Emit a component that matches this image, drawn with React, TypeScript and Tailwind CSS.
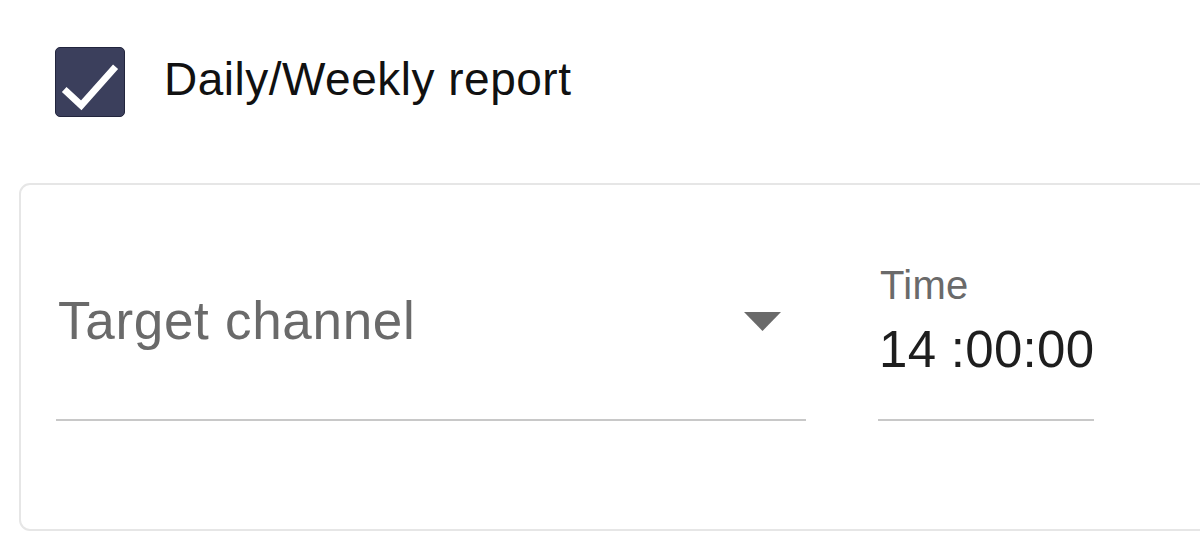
import React from "react";

export default function App() {
  return (
    <div
      className="w-[1200px] h-[548px] overflow-hidden bg-white pt-[47px]"
      style={{ fontFamily: "'Liberation Sans', Arial, sans-serif" }}
    >
      <div className="flex items-center pl-[55px]">
        <div className="w-[70px] h-[70px] rounded-[5px] bg-[#3b3f5c] border border-[#22253d] flex items-center justify-center">
          <svg width="70" height="70" viewBox="0 0 70 70">
            <path
              d="M11 45 L26 59 L59 22"
              fill="none"
              stroke="#ffffff"
              strokeWidth="7"
              strokeLinecap="square"
              strokeLinejoin="miter"
            />
          </svg>
        </div>
        <span className="ml-[39px] text-[46px] leading-none tracking-[0.5px] text-[#111111] mb-[6px] whitespace-nowrap">
          Daily/Weekly report
        </span>
      </div>

      <div className="ml-[19px] mt-[66px] w-[1260px] h-[348px] border-2 border-[#e6e6e6] rounded-[11px] bg-white pl-[35px] pt-[80px]">
        <div className="flex items-end gap-[72px]">
          <div className="w-[750px] border-b-2 border-[#c8c8c8] flex items-start justify-between pb-[72px]">
            <span className="text-[53px] leading-none tracking-[0.7px] text-[#6a6a6a] ml-[2px] whitespace-nowrap">
              Target channel
            </span>
            <svg width="38" height="20" viewBox="0 0 38 20" className="mr-[24px] mt-[18px]">
              <path d="M0 0 L37 0 L18.5 19 Z" fill="#6a6a6a" />
            </svg>
          </div>
          <div className="w-[216px] border-b-2 border-[#c8c8c8] flex flex-col pb-[44px]">
            <span className="text-[40px] leading-none tracking-[0.3px] text-[#6a6a6a] ml-[2px] whitespace-nowrap">
              Time
            </span>
            <span className="text-[51px] leading-none tracking-[0.3px] text-[#1e1e1e] mt-[19px] ml-[1px] whitespace-nowrap">
              14 :00:00
            </span>
          </div>
        </div>
      </div>
    </div>
  );
}
